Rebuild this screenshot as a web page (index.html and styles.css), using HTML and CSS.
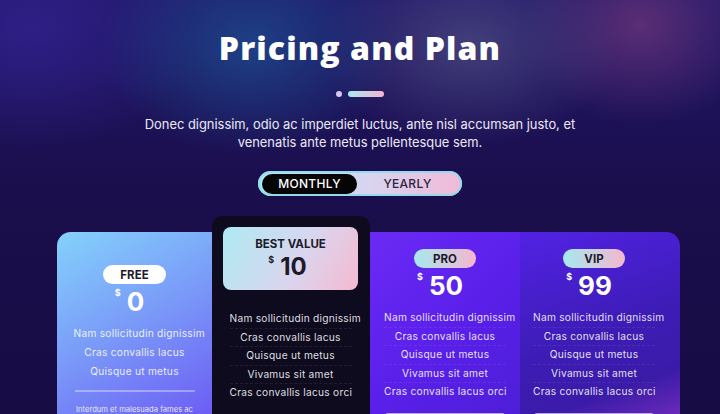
FILE: index.html
```html
<!DOCTYPE html>
<html>
<head>
<meta charset="utf-8">
<link rel="stylesheet" href="styles.css">
</head>
<body>
<div class="page">
  <header class="head">
    <h1 class="title">Pricing and Plan</h1>
    <div class="deco"><span class="dot"></span><span class="bar"></span></div>
    <p class="sub">Donec dignissim, odio ac imperdiet luctus, ante nisl accumsan justo, et<br>venenatis ante metus pellentesque sem.</p>
    <div class="toggle">
      <span class="opt active">MONTHLY</span>
      <span class="opt">YEARLY</span>
    </div>
  </header>
  <section class="plans">
    <div class="plan free">
      <span class="pill white">FREE</span>
      <div class="price"><sup>$</sup>0</div>
      <ul class="feats">
        <li>Nam sollicitudin dignissim</li>
        <li>Cras convallis lacus</li>
        <li>Quisque ut metus</li>
      </ul>
      <div class="rule"></div>
      <p class="note">Interdum et malesuada fames ac</p>
    </div>
    <div class="plan best">
      <div class="bestbox">
        <div class="bestlabel">BEST VALUE</div>
        <div class="price dark"><sup>$</sup>10</div>
      </div>
      <ul class="feats lined">
        <li>Nam sollicitudin dignissim</li>
        <li>Cras convallis lacus</li>
        <li>Quisque ut metus</li>
        <li>Vivamus sit amet</li>
        <li>Cras convallis lacus orci</li>
      </ul>
    </div>
    <div class="plan pro">
      <span class="pill grad">PRO</span>
      <div class="price"><sup>$</sup>50</div>
      <ul class="feats lined">
        <li>Nam sollicitudin dignissim</li>
        <li>Cras convallis lacus</li>
        <li>Quisque ut metus</li>
        <li>Vivamus sit amet</li>
        <li>Cras convallis lacus orci</li>
      </ul>
      <div class="btn"></div>
    </div>
    <div class="plan vip">
      <span class="pill grad">VIP</span>
      <div class="price"><sup>$</sup>99</div>
      <ul class="feats lined">
        <li>Nam sollicitudin dignissim</li>
        <li>Cras convallis lacus</li>
        <li>Quisque ut metus</li>
        <li>Vivamus sit amet</li>
        <li>Cras convallis lacus orci</li>
      </ul>
      <div class="btn"></div>
    </div>
  </section>
</div>
</body>
</html>
```
FILE: styles.css
```css
* { box-sizing: border-box; }
html, body { margin: 0; padding: 0; }
body {
  width: 720px;
  height: 414px;
  overflow: hidden;
  font-family: "Inter", "Open Sans", "DejaVu Sans", sans-serif;
  color: #fff;
  background-color: #1a0e4c;
  background-image:
    radial-gradient(ellipse 150px 110px at 250px 45px, rgba(28,72,140,0.85), rgba(28,72,140,0) 100%),
    radial-gradient(ellipse 150px 100px at 470px 45px, rgba(78,76,130,0.75), rgba(78,76,130,0) 100%),
    radial-gradient(ellipse 120px 100px at 640px 25px, rgba(100,50,120,0.85), rgba(100,50,120,0) 100%),
    radial-gradient(ellipse 170px 120px at 30px 30px, rgba(48,32,140,0.85), rgba(48,32,140,0) 100%),
    linear-gradient(180deg, #22186a 0%, #1a0e4c 45%, #170c44 100%);
}
.page { display: flex; flex-direction: column; align-items: center; }
.head { display: flex; flex-direction: column; align-items: center; padding-top: 26px; }
.title {
  margin: 0;
  font-family: "Open Sans", sans-serif;
  font-weight: 800;
  font-size: 32px;
  line-height: 44px;
  letter-spacing: 1.1px;
  color: #fff;
}
.deco { display: flex; align-items: center; gap: 6px; margin-top: 21px; margin-left: 1px; }
.dot { width: 6px; height: 6px; border-radius: 50%; background: #d6c8ec; }
.bar { width: 36px; height: 6px; border-radius: 3px; background: linear-gradient(90deg, #a9e6f2, #f4b6cf); }
.sub {
  margin: 19px 0 0;
  text-align: center;
  font-size: 12.9px;
  line-height: 18px;
  color: #ece8f6;
}
.toggle {
  margin-top: 19px;
  width: 204px;
  height: 25px;
  border-radius: 13px;
  padding: 2px 4px;
  display: flex;
  align-items: center;
  background: linear-gradient(90deg, #b5e6f4, #d9d4ef 55%, #f1b9d7);
  box-shadow: inset 0 0 0 2px rgba(140,220,240,0.9);
}
.opt {
  flex: 1;
  height: 20px;
  display: flex;
  align-items: center;
  justify-content: center;
  font-size: 12px;
  font-weight: 500;
  letter-spacing: 0.3px;
  color: #2a2440;
}
.opt.active { flex: 0 0 95px; background: #050505; color: #fff; border-radius: 10px; }

.plans {
  align-self: flex-start;
  margin-top: 20px;
  margin-left: 57px;
  display: grid;
  grid-template-columns: 155px 158px 150px 160px;
  align-items: start;
}
.plan {
  height: 200px;
  margin-top: 16px;
  display: flex;
  flex-direction: column;
  align-items: center;
}
.free {
  border-top-left-radius: 14px;
  background: linear-gradient(150deg, #84d2fb 0%, #7a9cf8 45%, #6b55f4 100%);
  padding-top: 33px;
}
.best {
  margin-top: 0;
  height: 216px;
  border-radius: 10px 10px 0 0;
  background: #0e0b1f;
  padding: 11px 12px 0 11px;
}
.pro {
  background: linear-gradient(135deg, #6a2af4 0%, #5a20ea 50%, #4c1ed6 100%);
  padding-top: 17px;
}
.vip {
  border-top-right-radius: 14px;
  padding: 17px 12px 0 0;
  background: linear-gradient(160deg, #5222e4 0%, #3d1cb6 50%, #3a1ba8 75%, #7d2fbf 100%);
}
.pill {
  height: 19px;
  border-radius: 10px;
  display: flex;
  align-items: center;
  justify-content: center;
  font-size: 11.5px;
  font-weight: 700;
  color: #1e1a2a;
  width: 62px;
}
.pill.white { background: #fff; width: 63px; }
.pill.grad { background: linear-gradient(90deg, #a6e8f0, #f5b7cd); }
.price {
  font-weight: 700;
  font-size: 26px;
  line-height: 32px;
  margin-top: 2px;
  margin-right: 10px;
  color: #fff;
  display: flex;
  align-items: flex-start;
}
.price sup { font-size: 9px; line-height: 14px; margin-right: 6px; font-weight: 700; }
.price.dark { color: #1e1a2a; font-size: 24px; line-height: 28px; margin-top: 2px; margin-right: 6px; }
.feats {
  list-style: none;
  margin: 3px 0 0;
  padding: 0;
  width: 122px;
  text-align: center;
  font-size: 10.2px;
  letter-spacing: 0.25px;
  color: rgba(255,255,255,0.88);
}
.feats li { line-height: 19px; white-space: nowrap; }
.feats.lined { margin-top: 7px; }
.feats.lined li { line-height: 17.5px; border-top: 1px dashed rgba(255,255,255,0.08); }
.feats.lined li:first-child { border-top: 0; }
.free .feats { margin-top: 6px; }
.rule { width: 120px; height: 2px; background: rgba(255,255,255,0.35); margin-top: 9px; }
.note { margin: 13px 0 0; font-size: 7.6px; color: rgba(255,255,255,0.85); }
.bestbox {
  width: 135px;
  height: 63px;
  border-radius: 8px;
  background: linear-gradient(120deg, #aeeaf2 0%, #d9d6ef 55%, #f6b9cf 100%);
  display: flex;
  flex-direction: column;
  align-items: center;
  padding-top: 10px;
}
.bestlabel { font-size: 11.5px; font-weight: 700; color: #1e1a2a; }
.best .feats { margin-top: 20px; }
.btn { width: 120px; height: 10px; margin-top: 12px; border-radius: 3px; background: rgba(205,195,250,0.85); }
```
